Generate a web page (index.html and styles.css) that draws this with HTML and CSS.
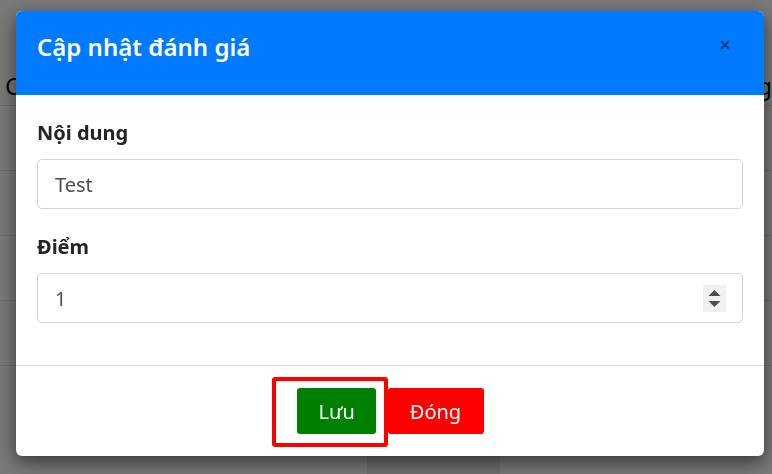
FILE: index.html
```html
<!DOCTYPE html>
<html lang="vi">
<head>
<meta charset="utf-8">
<title>Cập nhật đánh giá</title>
<link rel="stylesheet" href="styles.css">
</head>
<body>
<div class="page">
  <div class="page-row page-head">
    <span class="head-left">Câu hỏi</span>
    <span class="head-right">Xếp hạng</span>
  </div>
  <div class="page-row"></div>
  <div class="page-row"></div>
  <div class="page-row"></div>
  <div class="page-row"></div>
  <div class="page-row page-last">
    <span class="cell-dark"></span>
  </div>
</div>

<div class="backdrop"></div>

<div class="modal">
  <div class="modal-header">
    <h5 class="modal-title">Cập nhật đánh giá</h5>
    <button class="close" type="button" aria-label="Close">
      <svg width="10" height="10" viewBox="0 0 10 10"><path d="M1 1 L9 9 M9 1 L1 9" stroke="#00407f" stroke-width="2.2" stroke-linecap="butt"/></svg>
    </button>
  </div>
  <div class="modal-body">
    <div class="form-group">
      <label class="form-label">Nội dung</label>
      <div class="form-control"><span class="value">Test</span></div>
    </div>
    <div class="form-group">
      <label class="form-label">Điểm</label>
      <div class="form-control">
        <span class="value">1</span>
        <span class="spinner">
          <svg width="23" height="27" viewBox="0 0 23 27"><path d="M5.5 11 L11.5 5 L17.5 11 Z" fill="#4f4f4f"/><path d="M5.5 16 L11.5 22 L17.5 16 Z" fill="#4f4f4f"/></svg>
        </span>
      </div>
    </div>
  </div>
  <div class="modal-footer">
    <button class="btn btn-save" type="button">Lưu</button>
    <button class="btn btn-close" type="button">Đóng</button>
  </div>
</div>
</body>
</html>
```
FILE: styles.css
```css
html, body {
  margin: 0;
  padding: 0;
  height: 100%;
  overflow: hidden;
  background: #ffffff;
  font-family: "Noto Sans", "Open Sans", sans-serif;
}

.page {
  width: 772px;
  padding-top: 60px;
}

.page-row {
  height: 64px;
  border-bottom: 1px solid #e3e3e3;
  display: flex;
  justify-content: space-between;
  align-items: center;
}

.page-head {
  height: 46px;
  font-size: 24px;
  line-height: 36px;
  color: #111;
  padding-left: 5px;
  padding-top: 8px;
  box-sizing: border-box;
  align-items: flex-start;
}

.page-last {
  border-bottom: none;
  height: 110px;
  align-items: flex-start;
  padding-left: 367px;
  justify-content: flex-start;
}

.cell-dark {
  display: block;
  width: 133px;
  height: 40px;
  background: #e8e8e8;
  margin-top: 70px;
}

.backdrop {
  position: fixed;
  inset: 0;
  background: rgba(0, 0, 0, 0.53);
}

.modal {
  position: fixed;
  left: 16px;
  top: 11px;
  width: 748px;
  background: #fff;
  border-radius: 6px;
  box-shadow: 0 6px 18px rgba(0, 0, 0, 0.55);
}

.modal-header {
  background: #007bff;
  height: 84px;
  box-sizing: border-box;
  padding: 18px 34px 0 21px;
  border-radius: 6px 6px 0 0;
  display: flex;
  justify-content: space-between;
  align-items: flex-start;
}

.modal-title {
  margin: 0;
  color: #fff;
  font-size: 24px;
  line-height: 36px;
  font-weight: 600;
}

.close {
  border: 0;
  background: transparent;
  padding: 0;
  margin-top: 11px;
  width: 10px;
  height: 10px;
  display: flex;
  cursor: pointer;
}

.modal-body {
  padding: 23px 21px 42px;
  display: flex;
  flex-direction: column;
  gap: 23px;
}

.form-group {
  display: flex;
  flex-direction: column;
}

.form-label {
  font-size: 20px;
  line-height: 30px;
  font-weight: 700;
  color: #212529;
  margin-bottom: 11px;
}

.form-control {
  height: 50px;
  box-sizing: border-box;
  border: 1px solid #ced4da;
  border-radius: 5px;
  padding: 0 16px 0 17px;
  display: flex;
  align-items: center;
  justify-content: space-between;
  font-size: 20px;
  color: #495057;
}

.spinner {
  display: flex;
  background: #f0f0f0;
  width: 23px;
  height: 27px;
}

.modal-footer {
  border-top: 1px solid #dee2e6;
  padding: 22px 0;
  display: flex;
  justify-content: center;
  gap: 12px;
}

.btn {
  height: 46px;
  border: 0;
  border-radius: 3px;
  color: #fff;
  font-family: "Noto Sans", "Open Sans", sans-serif;
  font-size: 20px;
  padding: 0 22px;
  cursor: pointer;
}

.btn-save {
  background: #008000;
  width: 79px;
  position: relative;
}

.btn-save::after {
  content: "";
  position: absolute;
  left: -25px;
  right: -12px;
  top: -11px;
  bottom: -13px;
  border: 4px solid #ff0000;
  border-radius: 3px;
  pointer-events: none;
}

.btn-close {
  background: #ff0000;
  width: 96px;
}
```
